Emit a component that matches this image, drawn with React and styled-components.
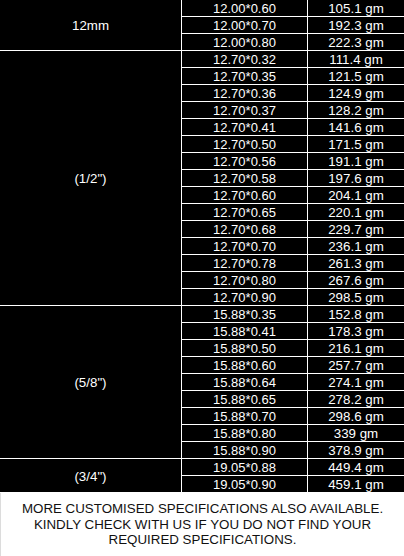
import React from "react";
import styled, { createGlobalStyle } from "styled-components";

const Global = createGlobalStyle`
  html, body { margin: 0; padding: 0; background: #fff; }
  body { font-family: "Liberation Sans", Arial, sans-serif; }
`;

const Page = styled.div`
  width: 404px;
  display: flex;
  flex-direction: column;
`;

const Grid = styled.div`
  display: grid;
  grid-template-columns: 181px 126px 97px;
  grid-auto-rows: 17px;
  background: #000;
`;

const Cell = styled.div`
  box-sizing: border-box;
  display: flex;
  align-items: center;
  justify-content: center;
  padding-top: 1px;
  border-bottom: 1px solid #fff;
  border-left: ${(p) => (p.$first ? "none" : "1px solid #fff")};
  color: #fff;
  font-size: ${(p) => p.$size || 13.33}px;
  line-height: 15px;
  white-space: nowrap;
  grid-row: ${(p) => (p.$span ? `span ${p.$span}` : "auto")};
`;

const Footer = styled.div`
  box-sizing: border-box;
  min-height: 63px;
  padding: 8px 6px 6px;
  border-left: 1px solid #dcdcdc;
  text-align: center;
  color: #111;
  font-size: 13.33px;
  line-height: 15.5px;
  text-transform: uppercase;
`;

const groups = [
  {
    label: "12mm",
    rows: [
      ["12.00*0.60", "105.1 gm"],
      ["12.00*0.70", "192.3 gm"],
      ["12.00*0.80", "222.3 gm"],
    ],
  },
  {
    label: '(1/2")',
    rows: [
      ["12.70*0.32", "111.4 gm"],
      ["12.70*0.35", "121.5 gm"],
      ["12.70*0.36", "124.9 gm"],
      ["12.70*0.37", "128.2 gm"],
      ["12.70*0.41", "141.6 gm"],
      ["12.70*0.50", "171.5 gm"],
      ["12.70*0.56", "191.1 gm"],
      ["12.70*0.58", "197.6 gm"],
      ["12.70*0.60", "204.1 gm"],
      ["12.70*0.65", "220.1 gm"],
      ["12.70*0.68", "229.7 gm"],
      ["12.70*0.70", "236.1 gm"],
      ["12.70*0.78", "261.3 gm"],
      ["12.70*0.80", "267.6 gm"],
      ["12.70*0.90", "298.5 gm"],
    ],
  },
  {
    label: '(5/8")',
    rows: [
      ["15.88*0.35", "152.8 gm"],
      ["15.88*0.41", "178.3 gm"],
      ["15.88*0.50", "216.1 gm"],
      ["15.88*0.60", "257.7 gm"],
      ["15.88*0.64", "274.1 gm"],
      ["15.88*0.65", "278.2 gm"],
      ["15.88*0.70", "298.6 gm"],
      ["15.88*0.80", "339 gm"],
      ["15.88*0.90", "378.9 gm"],
    ],
  },
  {
    label: '(3/4")',
    rows: [
      ["19.05*0.88", "449.4 gm"],
      ["19.05*0.90", "459.1 gm"],
    ],
  },
];

export default function App() {
  return (
    <>
      <Global />
      <Page>
        <Grid>
          {groups.map((g) =>
            g.rows.map((r, i) => (
              <React.Fragment key={r[0]}>
                {i === 0 && (
                  <Cell $first $span={g.rows.length}>
                    {g.label}
                  </Cell>
                )}
                <Cell $size={13}>{r[0]}</Cell>
                <Cell>{r[1]}</Cell>
              </React.Fragment>
            ))
          )}
        </Grid>
        <Footer>
          More customised specifications also available. Kindly check with us if
          you do not find your required specifications.
        </Footer>
      </Page>
    </>
  );
}
